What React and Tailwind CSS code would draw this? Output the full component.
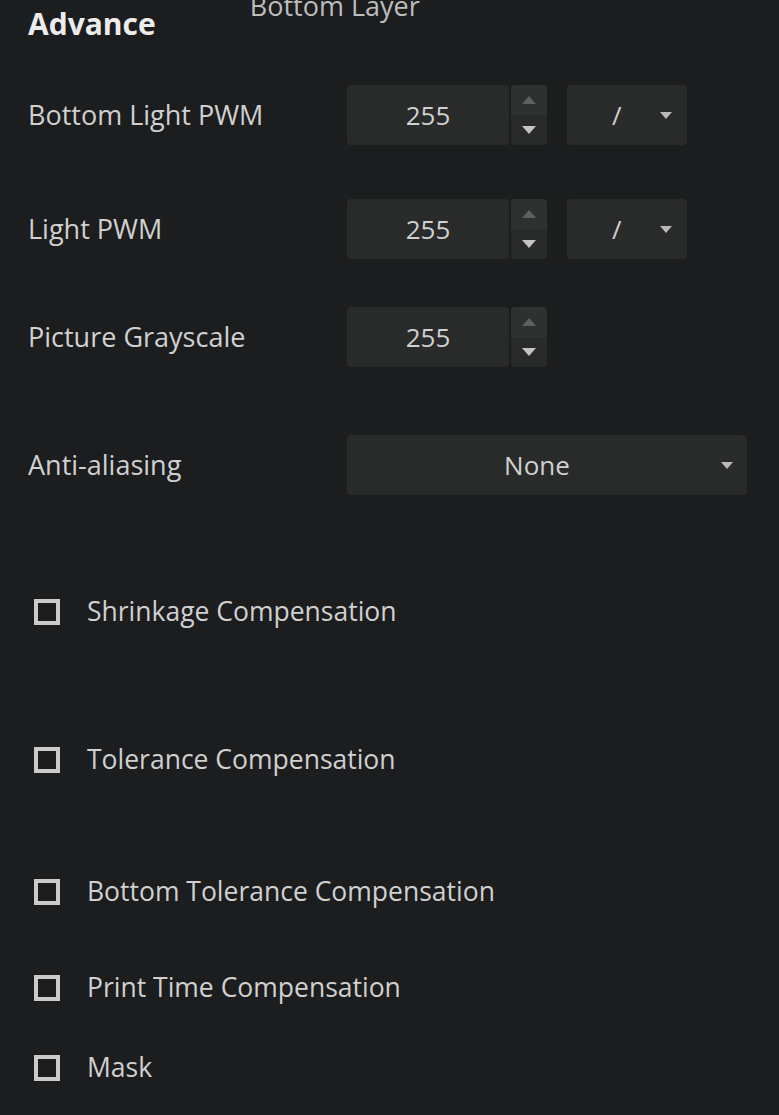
import React from "react"

const font = { fontFamily: "'Open Sans', 'Noto Sans', sans-serif" }

function Tri({ down = true, className = "" }) {
  return (
    <svg width="14" height="8" viewBox="0 0 14 8" className={className}>
      {down ? <polygon points="0,0 14,0 7,8" fill="currentColor" /> : <polygon points="0,8 14,8 7,0" fill="currentColor" />}
    </svg>
  )
}

function SpinBox({ value }) {
  return (
    <div className="flex h-[60px] gap-[2px]">
      <div className="w-[162px] h-full rounded-[4px] bg-[#292a2a] flex items-center justify-center text-[26px] text-[#d0d0d0]">
        {value}
      </div>
      <div className="w-[36px] h-full rounded-[4px] bg-[#292a2a] flex flex-col overflow-hidden">
        <div className="h-1/2 bg-[#2f3030] flex items-center justify-center text-[#5f6161]">
          <Tri down={false} />
        </div>
        <div className="h-1/2 flex items-center justify-center text-[#c4c4c4]">
          <Tri />
        </div>
      </div>
    </div>
  )
}

function SlashSelect() {
  return (
    <div className="ml-[20px] w-[120px] h-[60px] rounded-[4px] bg-[#292a2a] flex items-center text-[#d0d0d0]">
      <span className="ml-[45px] text-[26px]">/</span>
      <Tri className="ml-auto mr-[15px] w-[12px] h-[7px] text-[#b8b8b8]" />
    </div>
  )
}

function Row({ label, children, className = "" }) {
  return (
    <div className={`flex items-center h-[60px] ${className}`}>
      <div className="w-[347px] pl-[28px] text-[27px] text-[#d0d0d0]">{label}</div>
      {children}
    </div>
  )
}

function Check({ label, className = "" }) {
  return (
    <div className={`flex items-center h-[40px] pl-[34px] ${className}`}>
      <div className="w-[26px] h-[26px] border-[4px] border-[#cbcbcb] shrink-0" />
      <span className="ml-[27px] text-[26.5px] text-[#d0d0d0]">{label}</span>
    </div>
  )
}

export default function App() {
  return (
    <div className="w-full h-[1115px] bg-[#1c1d1f] overflow-hidden" style={font}>
      {/* Header */}
      <div className="flex items-start h-[85px]">
        <div className="ml-[28px] mt-[1px] text-[30px] font-bold text-[#ececec]">Advance</div>
        <div className="ml-[94px] -mt-[14px] text-[27px] text-[#bdbdbd]">Bottom Layer</div>
      </div>

      <Row label="Bottom Light PWM">
        <SpinBox value="255" />
        <SlashSelect />
      </Row>
      <Row label="Light PWM" className="mt-[54px]">
        <SpinBox value="255" />
        <SlashSelect />
      </Row>
      <Row label="Picture Grayscale" className="mt-[48px]">
        <SpinBox value="255" />
      </Row>
      <Row label="Anti-aliasing" className="mt-[68px]">
        <div className="w-[400px] h-[60px] rounded-[4px] bg-[#292a2a] flex items-center text-[#d0d0d0]">
          <span className="flex-1 text-center text-[26px] pl-[6px]">None</span>
          <Tri className="mr-[14px] w-[12px] h-[7px] text-[#b8b8b8]" />
        </div>
      </Row>

      <Check label="Shrinkage Compensation" className="mt-[97px]" />
      <Check label="Tolerance Compensation" className="mt-[108px]" />
      <Check label="Bottom Tolerance Compensation" className="mt-[92px]" />
      <Check label="Print Time Compensation" className="mt-[56px]" />
      <Check label="Mask" className="mt-[40px]" />
    </div>
  )
}
